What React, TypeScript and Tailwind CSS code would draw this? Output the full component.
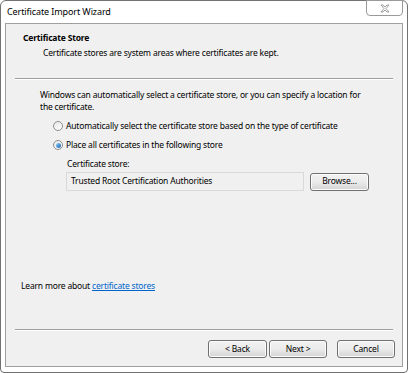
import React from "react";

const font = { fontFamily: '"Noto Sans", "Open Sans", sans-serif' };

function Radio({ checked }: { checked?: boolean }) {
  return (
    <span className="relative inline-flex h-[10px] w-[10px] shrink-0 items-center justify-center rounded-full border border-[#8e8f8f] bg-gradient-to-br from-[#e6e6e6] to-[#ffffff]">
      {checked && (
        <span className="h-[5px] w-[5px] rounded-full bg-gradient-to-br from-[#8ad4ff] to-[#1c5fa8]" />
      )}
    </span>
  );
}

function Btn({ children, w }: { children: React.ReactNode; w: string }) {
  return (
    <div
      className={`${w} flex h-[18px] items-center justify-center rounded-[3px] border border-[#707070] bg-gradient-to-b from-[#f2f2f2] via-[#ebebeb] to-[#d4d4d4] text-[8.5px] text-black shadow-[inset_0_0_0_1px_#fcfcfc]`}
    >
      {children}
    </div>
  );
}

export default function App() {
  return (
    <div className="h-[373px] w-[410px] bg-white" style={font}>
      <div className="relative flex h-[373px] w-[408px] flex-col rounded-t-[6px] rounded-b-[4px] border border-[#717171] bg-white">
        {/* title bar */}
        <div className="flex h-[22px] items-center pl-[6px] text-[9px] tracking-[-0.1px] text-black">
          Certificate Import Wizard
        </div>
        {/* close button */}
        <div className="absolute right-[4px] top-[-1px] flex h-[16px] w-[37px] items-center justify-center rounded-b-[4px] border border-[#9a9a9a] bg-white">
          <svg width="10" height="9" viewBox="0 0 10 9">
            <path
              d="M1 1 L3 1 L5 3 L7 1 L9 1 L6 4.5 L9 8 L7 8 L5 6 L3 8 L1 8 L4 4.5 Z"
              fill="#fafafa"
              stroke="#8a8a8a"
              strokeWidth="0.8"
              strokeLinejoin="round"
            />
          </svg>
        </div>
        {/* client area */}
        <div className="mx-[4px] mb-[5px] flex flex-1 flex-col border border-[#a0a0a0] bg-[#f0f0f0] text-[8.5px] tracking-[-0.18px] text-black">
          <div className="pl-[17px] pt-[8px] font-bold leading-[12px]">Certificate Store</div>
          <div className="mt-[3px] pl-[37px] leading-[12px]">
            Certificate stores are system areas where certificates are kept.
          </div>
          <div className="mx-[9px] mt-[19px] h-[2px] border-t border-b border-t-[#a0a0a0] border-b-white" />
          <div className="mt-[9px] pl-[34px] leading-[12px]">
            Windows can automatically select a certificate store, or you can specify a location for
            <br />
            the certificate.
          </div>
          <div className="mt-[7px] flex h-[12px] items-center gap-[3px] pl-[47px]">
            <Radio />
            <span>Automatically select the certificate store based on the type of certificate</span>
          </div>
          <div className="mt-[7px] flex h-[12px] items-center gap-[3px] pl-[47px]">
            <Radio checked />
            <span>Place all certificates in the following store</span>
          </div>
          <div className="mt-[7px] pl-[61px] leading-[12px]">Certificate store:</div>
          <div className="mt-[2px] flex items-center pl-[60px]">
            <div className="flex h-[19px] w-[238px] items-center border border-[#d9d9d9] bg-[#f0f0f0] pl-[4px]">
              Trusted Root Certification Authorities
            </div>
            <div className="ml-[6px]">
              <Btn w="w-[59px]">Browse...</Btn>
            </div>
          </div>
          <div className="flex-1" />
          <div className="pl-[15px] leading-[12px]">
            Learn more about{" "}
            <span className="text-[#0066cc] underline">certificate stores</span>
          </div>
          <div className="mx-[9px] mt-[37px] h-[2px] border-t border-b border-t-[#a0a0a0] border-b-white" />
          <div className="mb-[8px] mt-[9px] flex justify-end pr-[7px]">
            <Btn w="w-[59px]">&lt; Back</Btn>
            <div className="ml-[2px]">
              <Btn w="w-[58px]">Next &gt;</Btn>
            </div>
            <div className="ml-[10px]">
              <Btn w="w-[58px]">Cancel</Btn>
            </div>
          </div>
        </div>
      </div>
    </div>
  );
}
